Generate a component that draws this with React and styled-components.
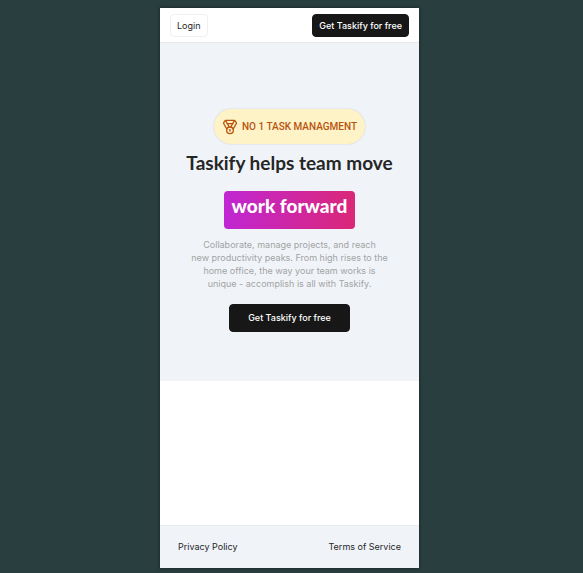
import React from "react";
import styled, { createGlobalStyle } from "styled-components";
import { Medal } from "lucide-react";

const GlobalStyle = createGlobalStyle`
  *, *::before, *::after { box-sizing: border-box; }
  body {
    margin: 0;
    background: #293e3e;
    font-family: Inter, "Liberation Sans", sans-serif;
    color: #262626;
  }
`;

const Backdrop = styled.div`
  display: flex;
  min-height: 100vh;
  padding: 8px 164px 5px 160px;
`;

const Page = styled.div`
  flex: 1;
  min-width: 0;
  display: flex;
  flex-direction: column;
  background: #fff;
  box-shadow: 0 0 3px rgba(0, 0, 0, 0.5);
`;

const Navbar = styled.header`
  display: flex;
  align-items: center;
  justify-content: space-between;
  padding: 6px 10px 5px;
  border-bottom: 1px solid #e6e8ea;
`;

const Button = styled.button`
  height: ${({ $large }) => ($large ? 28 : 23)}px;
  padding: 0 ${({ $large }) => ($large ? 18 : 6)}px;
  border: 1px solid ${({ $outline }) => ($outline ? "#f0f0f1" : "#171717")};
  border-radius: 4px;
  background: ${({ $outline }) => ($outline ? "#fff" : "#171717")};
  color: ${({ $outline }) => ($outline ? "#262626" : "#fff")};
  font: ${({ $outline }) => ($outline ? 400 : 500)} 9px/12px Inter, sans-serif;
  white-space: nowrap;
  cursor: pointer;
`;

const Hero = styled.main`
  display: flex;
  flex-direction: column;
  align-items: center;
  padding: 66px 20px 49px;
  background: #f0f4f9;
  text-align: center;
`;

const Badge = styled.div`
  display: flex;
  align-items: center;
  gap: 4px;
  height: 35px;
  padding: 0 8px;
  border-radius: 18px;
  background: #fef2c7;
  box-shadow: 0 0 2px rgba(0, 0, 0, 0.16);
  color: #b9540f;
  font: 500 10px/14px Roboto, sans-serif;
  text-transform: uppercase;
  white-space: nowrap;
`;

const Title = styled.h1`
  display: flex;
  flex-direction: column;
  align-items: center;
  gap: 16px;
  margin: 7px 0 0;
  font: 700 19px/24px Lato, sans-serif;
  white-space: nowrap;
`;

const Highlight = styled.span`
  height: 38px;
  padding: 3px 8px 11px;
  border-radius: 4px;
  background: linear-gradient(to right, #c026d3, #db2777);
  color: #fff;
  font-weight: 900;
`;

const Description = styled.p`
  margin: 9px 0 14px;
  color: #a3a3a3;
  font: 400 9px/13px Inter, sans-serif;
`;

const Line = styled.span`
  display: block;
  white-space: nowrap;
`;

const Footer = styled.footer`
  display: flex;
  align-items: center;
  justify-content: space-between;
  margin-top: auto;
  height: 43px;
  padding: 0 18px;
  border-top: 1px solid #e8ebee;
  background: #f0f4f9;
`;

const FooterLink = styled.a`
  color: #262626;
  font-size: 9px;
  line-height: 12px;
  text-decoration: none;
`;

const copy = [
  "Collaborate, manage projects, and reach",
  "new productivity peaks. From high rises to the",
  "home office, the way your team works is",
  "unique - accomplish is all with Taskify.",
];

export default function App() {
  return (
    <>
      <GlobalStyle />
      <Backdrop>
        <Page>
          <Navbar>
            <Button type="button" $outline>Login</Button>
            <Button type="button">Get Taskify for free</Button>
          </Navbar>
          <Hero>
            <Badge>
              <Medal size={16} strokeWidth={2} aria-hidden="true" />
              No 1 task managment
            </Badge>
            <Title>
              <span>Taskify helps team move</span>
              <Highlight>work forward</Highlight>
            </Title>
            <Description>
              {copy.map((line) => (
                <Line key={line}>{line} </Line>
              ))}
            </Description>
            <Button type="button" $large>Get Taskify for free</Button>
          </Hero>
          <Footer>
            <FooterLink href="#privacy">Privacy Policy</FooterLink>
            <FooterLink href="#terms">Terms of Service</FooterLink>
          </Footer>
        </Page>
      </Backdrop>
    </>
  );
}
